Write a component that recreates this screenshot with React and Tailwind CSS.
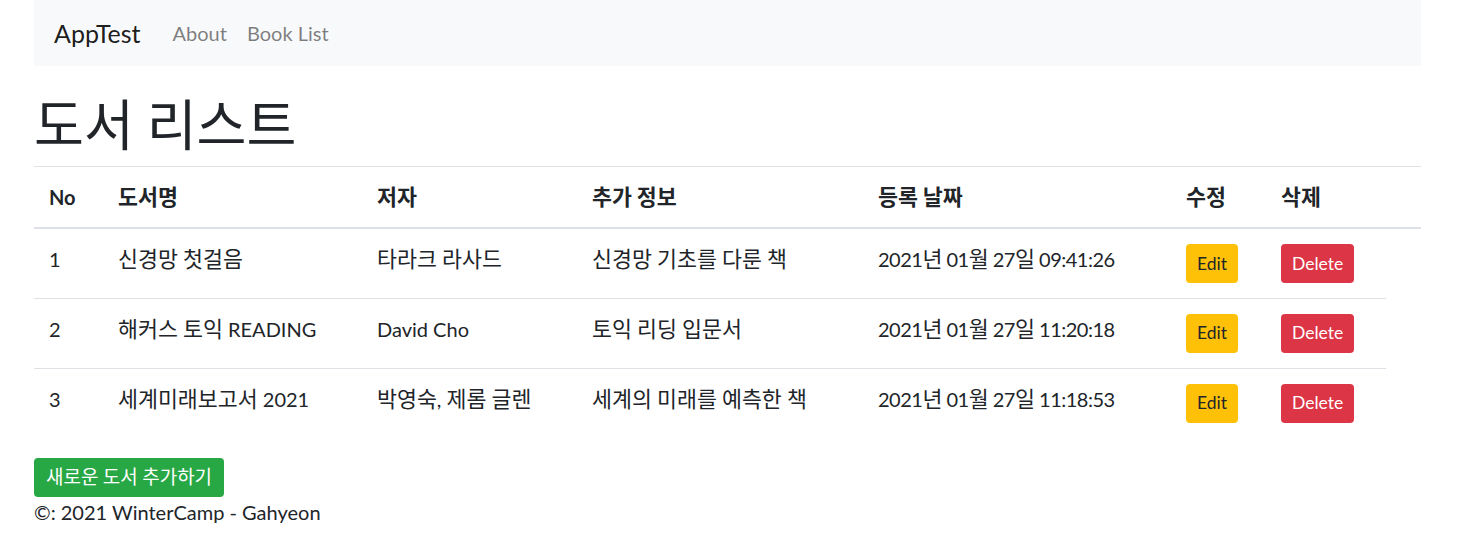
import React from 'react';

const books = [
  { id: 1, title: '신경망 첫걸음', author: '타라크 라사드', info: '신경망 기초를 다룬 책', date: '2021년 01월 27일 09:41:26' },
  { id: 2, title: '해커스 토익 READING', author: 'David Cho', info: '토익 리딩 입문서', date: '2021년 01월 27일 11:20:18' },
  { id: 3, title: '세계미래보고서 2021', author: '박영숙, 제롬 글렌', info: '세계의 미래를 예측한 책', date: '2021년 01월 27일 11:18:53' },
];

const headers = ['No', '도서명', '저자', '추가 정보', '등록 날짜', '수정', '삭제', ''];
const widths = ['w-[69px]', 'w-[259px]', 'w-[215px]', 'w-[286px]', 'w-[308px]', 'w-[95px]', 'w-[120px]', 'w-[35px]'];

// hangul runs get a slightly bigger size so they match the wider korean face in the shot
const K = ({ t }) =>
  t.split(/([\uAC00-\uD7A3]+)/).map((s, i) =>
    /[\uAC00-\uD7A3]/.test(s) ? (
      <span key={i} className="text-[1.085em] leading-none">{s}</span>
    ) : (
      s
    )
  );

export default function App() {
  return (
    <div className="min-h-screen bg-white text-[#212529] font-['Lato','Noto_Sans_CJK_KR',sans-serif]">
      <div className="ml-[34px] w-[1387px]">
        {/* navbar */}
        <nav className="h-[66px] bg-[#f8f9fa] px-5 flex items-center">
          <span className="text-[25px] leading-[30px] text-black/90 mr-[22px]">AppTest</span>
          <a className="px-[10px] text-[20px] leading-[30px] text-black/50">About</a>
          <a className="px-[10px] text-[20px] leading-[30px] text-black/50">Book List</a>
        </nav>

        <h1 className="mt-[30px] mb-[10px] h-[60px] text-[50px] leading-[60px] font-normal">
          <K t="도서 리스트" />
        </h1>

        <table className="table-fixed border-collapse w-full text-[20px] leading-[30px] mb-5">
          <colgroup>
            {widths.map((w, i) => (
              <col key={i} className={w} />
            ))}
          </colgroup>
          <thead>
            <tr>
              {headers.map((h, i) => (
                <th
                  key={i}
                  className="text-left font-bold px-[15px] pt-[15px] pb-[15px] border-t border-b-2 border-[#dee2e6] align-top"
                >
                  <K t={h} />
                </th>
              ))}
            </tr>
          </thead>
          <tbody>
            {books.map((b, idx) => {
              const cell = `px-[15px] pt-[15px] align-top h-[70px] ${idx > 0 ? 'border-t border-[#dee2e6]' : ''}`;
              return (
                <tr key={b.id}>
                  <td className={cell}>{b.id}</td>
                  <td className={cell}><K t={b.title} /></td>
                  <td className={cell}><K t={b.author} /></td>
                  <td className={cell}><K t={b.info} /></td>
                  <td className={`${cell} tracking-[-0.5px]`}><K t={b.date} /></td>
                  <td className={cell}>
                    <button className="h-[39px] px-[11px] rounded-[4px] bg-[#ffc107] text-[#212529] text-[17.5px] leading-[26px]">
                      Edit
                    </button>
                  </td>
                  <td className={cell}>
                    <button className="h-[39px] px-[11px] rounded-[4px] bg-[#dc3545] text-white text-[17.5px] leading-[26px]">
                      Delete
                    </button>
                  </td>
                </tr>
              );
            })}
          </tbody>
        </table>

        <button className="h-[39px] px-[12px] rounded-[4px] bg-[#28a745] text-white text-[17.5px] leading-[26px]">
          <K t="새로운 도서 추가하기" />
        </button>
        <p className="text-[20px] leading-[30px]">©: 2021 WinterCamp - Gahyeon</p>
      </div>
    </div>
  );
}
